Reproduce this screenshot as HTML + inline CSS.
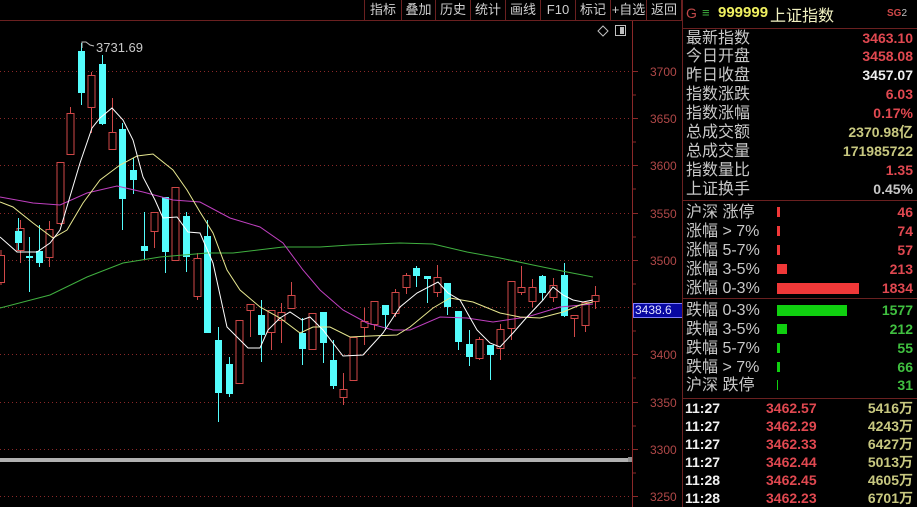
<!DOCTYPE html>
<html><head><meta charset="utf-8"><style>
*{margin:0;padding:0;box-sizing:border-box}
html,body{width:917px;height:507px;overflow:hidden}
body{background:#000;position:relative;font-family:"Liberation Sans","Noto Sans CJK SC",sans-serif}
.a{position:absolute;white-space:nowrap}
.tb{position:absolute;top:0;height:20px;border-right:1px solid #6a2020;color:#d0d0d0;font-size:13px;line-height:20px;text-align:center}
.lb{position:absolute;left:686px;color:#c8c8c8;font-size:16px;line-height:19px}
.v{position:absolute;right:4px;font-size:14px;font-weight:bold;line-height:19px;text-align:right;white-space:nowrap}
.t{position:absolute;font-size:14px;font-weight:bold;line-height:18px;white-space:nowrap}
.r{color:#e04850}.g{color:#40c040}.y{color:#c8c880}.w{color:#f0f0f0}.gy{color:#c8c8c8}
.ax{position:absolute;left:650px;color:#b04848;font-size:12px;line-height:12px}
</style></head><body>
<div class="a" style="left:0;top:20px;width:682px;height:1px;background:#6a2020"></div>
<div class="a" style="left:364px;top:0;width:1px;height:20px;background:#6a2020"></div>
<div class="tb" style="left:365px;width:37px">指标</div>
<div class="tb" style="left:402px;width:34px">叠加</div>
<div class="tb" style="left:436px;width:35px">历史</div>
<div class="tb" style="left:471px;width:35px">统计</div>
<div class="tb" style="left:506px;width:35px">画线</div>
<div class="tb" style="left:541px;width:35px">F10</div>
<div class="tb" style="left:576px;width:35px">标记</div>
<div class="tb" style="left:611px;width:36px">+自选</div>
<div class="tb" style="left:647px;width:35px">返回</div>

<svg class="a" style="left:0;top:0" width="682" height="507">
<g stroke="#8a2828" stroke-width="1" stroke-dasharray="1,3">
<line x1="0" y1="71.5" x2="632" y2="71.5"/><line x1="0" y1="118.5" x2="632" y2="118.5"/><line x1="0" y1="165.5" x2="632" y2="165.5"/><line x1="0" y1="213.5" x2="632" y2="213.5"/><line x1="0" y1="260.5" x2="632" y2="260.5"/><line x1="0" y1="307.5" x2="632" y2="307.5"/><line x1="0" y1="354.5" x2="632" y2="354.5"/><line x1="0" y1="402.5" x2="632" y2="402.5"/><line x1="0" y1="449.5" x2="632" y2="449.5"/><line x1="0" y1="496.5" x2="632" y2="496.5"/>
</g>
<line x1="632.5" y1="21" x2="632.5" y2="507" stroke="#8a2828"/>
<g stroke="#8a2828">
<line x1="633" y1="71.5" x2="638" y2="71.5"/><line x1="633" y1="118.5" x2="638" y2="118.5"/><line x1="633" y1="165.5" x2="638" y2="165.5"/><line x1="633" y1="213.5" x2="638" y2="213.5"/><line x1="633" y1="260.5" x2="638" y2="260.5"/><line x1="633" y1="307.5" x2="638" y2="307.5"/><line x1="633" y1="354.5" x2="638" y2="354.5"/><line x1="633" y1="402.5" x2="638" y2="402.5"/><line x1="633" y1="449.5" x2="638" y2="449.5"/><line x1="633" y1="496.5" x2="638" y2="496.5"/>
<line x1="633" y1="95" x2="636" y2="95"/><line x1="633" y1="142" x2="636" y2="142"/><line x1="633" y1="189" x2="636" y2="189"/><line x1="633" y1="237" x2="636" y2="237"/><line x1="633" y1="284" x2="636" y2="284"/><line x1="633" y1="331" x2="636" y2="331"/><line x1="633" y1="378" x2="636" y2="378"/><line x1="633" y1="426" x2="636" y2="426"/><line x1="633" y1="473" x2="636" y2="473"/>
</g>
<rect x="0" y="458" width="632" height="4" fill="#b0b0b0"/>
<polygon points="603,26 608,31 603,36 598,31" fill="none" stroke="#c0c0c0"/>
<rect x="615.5" y="25.5" width="10" height="10" fill="none" stroke="#c0c0c0"/><rect x="620" y="27" width="4" height="7" fill="#c0c0c0"/>

<g stroke="#d04848" fill="#000" stroke-width="1">
<line x1="1" y1="250" x2="1" y2="285"/><rect x="-2.5" y="255.5" width="7" height="27"/>
<line x1="20.5" y1="220" x2="20.5" y2="263"/><rect x="17" y="228.5" width="7" height="22"/>
<line x1="49.5" y1="221" x2="49.5" y2="267"/><rect x="46" y="229.5" width="7" height="28"/>
<line x1="60.5" y1="162" x2="60.5" y2="225"/><rect x="57" y="162.5" width="7" height="61"/>
<line x1="70.5" y1="107" x2="70.5" y2="155"/><rect x="67" y="113.5" width="7" height="41"/>
<line x1="91.5" y1="72" x2="91.5" y2="133"/><rect x="88" y="75.5" width="7" height="32"/>
<line x1="112.5" y1="98" x2="112.5" y2="149"/><rect x="109" y="132.5" width="7" height="17"/>
<line x1="154.5" y1="212" x2="154.5" y2="248"/><rect x="151" y="212.5" width="7" height="19"/>
<rect x="172" y="187.5" width="7" height="73"/>
<line x1="197.5" y1="253" x2="197.5" y2="300"/><rect x="194" y="258.5" width="7" height="38"/>
<rect x="236" y="320.5" width="7" height="63"/>
<line x1="250.5" y1="304" x2="250.5" y2="337"/><rect x="247" y="304.5" width="7" height="6"/>
<line x1="271.5" y1="310" x2="271.5" y2="350"/><rect x="268" y="310.5" width="7" height="22"/>
<line x1="281.5" y1="303" x2="281.5" y2="343"/><rect x="278" y="312.5" width="7" height="8"/>
<line x1="291.5" y1="282" x2="291.5" y2="308"/><rect x="288" y="295.5" width="7" height="13"/>
<rect x="309" y="313.5" width="7" height="36"/>
<line x1="343.5" y1="373" x2="343.5" y2="405"/><rect x="340" y="389.5" width="7" height="8"/>
<rect x="350" y="337.5" width="7" height="43"/>
<line x1="364.5" y1="308" x2="364.5" y2="345"/><rect x="361" y="321.5" width="7" height="6"/>
<line x1="374.5" y1="301" x2="374.5" y2="330"/><rect x="371" y="301.5" width="7" height="23"/>
<line x1="395.5" y1="289" x2="395.5" y2="317"/><rect x="392" y="292.5" width="7" height="21"/>
<line x1="406.5" y1="273" x2="406.5" y2="294"/><rect x="403" y="275.5" width="7" height="12"/>
<line x1="437.5" y1="265" x2="437.5" y2="297"/><rect x="434" y="277.5" width="7" height="15"/>
<line x1="479.5" y1="337" x2="479.5" y2="360"/><rect x="476" y="339.5" width="7" height="19"/>
<line x1="500.5" y1="324" x2="500.5" y2="360"/><rect x="497" y="329.5" width="7" height="19"/>
<line x1="511.5" y1="281" x2="511.5" y2="340"/><rect x="508" y="281.5" width="7" height="47"/>
<line x1="521.5" y1="266" x2="521.5" y2="295"/><rect x="518" y="287.5" width="7" height="5"/>
<line x1="532.5" y1="279" x2="532.5" y2="307"/><rect x="529" y="287.5" width="7" height="14"/>
<line x1="553.5" y1="278" x2="553.5" y2="302"/><rect x="550" y="285.5" width="7" height="12"/>
<line x1="574.5" y1="315" x2="574.5" y2="337"/><rect x="571" y="315.5" width="7" height="3"/>
<line x1="585.5" y1="302" x2="585.5" y2="332"/><rect x="582" y="302.5" width="7" height="23"/>
<line x1="595.5" y1="286" x2="595.5" y2="309"/><rect x="592" y="295.5" width="7" height="6"/>
</g>
<g fill="#54fcfc" stroke="#54fcfc">
<line x1="18.5" y1="218" x2="18.5" y2="250"/><rect x="15" y="231" width="7" height="12" stroke="none"/>
<line x1="29.5" y1="237" x2="29.5" y2="292"/><rect x="26" y="256" width="7" height="2" stroke="none"/>
<line x1="39.5" y1="225" x2="39.5" y2="267"/><rect x="36" y="251" width="7" height="12" stroke="none"/>
<line x1="81.5" y1="43" x2="81.5" y2="105"/><rect x="78" y="51" width="7" height="42" stroke="none"/>
<line x1="102.5" y1="55" x2="102.5" y2="125"/><rect x="99" y="64" width="7" height="60" stroke="none"/>
<line x1="122.5" y1="123" x2="122.5" y2="230"/><rect x="119" y="129" width="7" height="70" stroke="none"/>
<line x1="133.5" y1="158" x2="133.5" y2="194"/><rect x="130" y="170" width="7" height="10" stroke="none"/>
<line x1="144.5" y1="212" x2="144.5" y2="260"/><rect x="141" y="246" width="7" height="5" stroke="none"/>
<line x1="165.5" y1="197" x2="165.5" y2="273"/><rect x="162" y="197" width="7" height="55" stroke="none"/>
<line x1="186.5" y1="212" x2="186.5" y2="272"/><rect x="183" y="216" width="7" height="41" stroke="none"/>
<line x1="207.5" y1="220" x2="207.5" y2="333"/><rect x="204" y="236" width="7" height="97" stroke="none"/>
<line x1="218.5" y1="327" x2="218.5" y2="422"/><rect x="215" y="340" width="7" height="53" stroke="none"/>
<line x1="229.5" y1="357" x2="229.5" y2="397"/><rect x="226" y="364" width="7" height="30" stroke="none"/>
<line x1="261.5" y1="300" x2="261.5" y2="362"/><rect x="258" y="315" width="7" height="20" stroke="none"/>
<line x1="302.5" y1="318" x2="302.5" y2="365"/><rect x="299" y="333" width="7" height="16" stroke="none"/>
<line x1="323.5" y1="312" x2="323.5" y2="363"/><rect x="320" y="312" width="7" height="31" stroke="none"/>
<line x1="333.5" y1="340" x2="333.5" y2="389"/><rect x="330" y="360" width="7" height="26" stroke="none"/>
<line x1="385.5" y1="305" x2="385.5" y2="330"/><rect x="382" y="305" width="7" height="10" stroke="none"/>
<line x1="416.5" y1="266" x2="416.5" y2="287"/><rect x="413" y="268" width="7" height="8" stroke="none"/>
<line x1="427.5" y1="276" x2="427.5" y2="303"/><rect x="424" y="276" width="7" height="3" stroke="none"/>
<line x1="447.5" y1="283" x2="447.5" y2="315"/><rect x="444" y="283" width="7" height="24" stroke="none"/>
<line x1="458.5" y1="311" x2="458.5" y2="350"/><rect x="455" y="311" width="7" height="31" stroke="none"/>
<line x1="469.5" y1="330" x2="469.5" y2="366"/><rect x="466" y="344" width="7" height="13" stroke="none"/>
<line x1="490.5" y1="345" x2="490.5" y2="380"/><rect x="487" y="345" width="7" height="10" stroke="none"/>
<line x1="542.5" y1="275" x2="542.5" y2="300"/><rect x="539" y="276" width="7" height="17" stroke="none"/>
<line x1="564.5" y1="263" x2="564.5" y2="317"/><rect x="561" y="275" width="7" height="41" stroke="none"/>
</g>
<g fill="none" stroke-width="1">
<polyline stroke="#40b040" points="0,308 50,295 87,277 123,263 160,257 207,253 233,253 283,247 320,247 350,245 400,243 433,244 467,252 500,258 533,265 567,272 593,277"/>
<polyline stroke="#c040c0" points="0,197 33,203 60,205 87,193 117,186 143,192 173,200 200,202 230,218 260,227 283,243 303,270 320,290 343,310 367,323 393,330 410,330 440,317 467,318 493,322 527,317 560,307 593,304"/>
<polyline stroke="#e8e890" points="0,202 13,207 33,223 53,238 67,230 83,203 100,180 120,165 137,156 153,154 173,170 187,190 200,212 213,233 227,270 240,290 260,307 280,318 300,333 313,327 330,327 350,337 370,336 397,335 410,327 433,308 450,298 473,302 500,313 520,317 540,318 563,312 580,305 593,302"/>
<polyline stroke="#ffffff" points="0,237 17,252 37,252 50,243 60,230 80,163 92,128 100,118 112,108 123,120 133,140 143,177 155,200 163,218 177,217 188,232 200,233 213,263 227,327 248,348 260,348 268,330 280,318 290,312 302,320 310,317 323,330 343,356 363,355 383,333 400,307 417,293 438,282 448,293 460,300 477,330 490,343 500,347 513,333 527,317 543,300 553,287 563,295 573,300 583,302 593,300"/>
</g>
<polyline points="82,48 82,42 86,42 90,45 94,46" fill="none" stroke="#c0c0c0"/>
<text x="96" y="52" fill="#c8c8c8" font-size="13" font-family="Liberation Sans">3731.69</text>
<rect x="628" y="457" width="4" height="5" fill="#909090"/>
</svg>

<div class="ax" style="top:66px">3700</div><div class="ax" style="top:113px">3650</div><div class="ax" style="top:160px">3600</div><div class="ax" style="top:208px">3550</div><div class="ax" style="top:255px">3500</div><div class="ax" style="top:349px">3400</div><div class="ax" style="top:397px">3350</div><div class="ax" style="top:444px">3300</div><div class="ax" style="top:491px">3250</div>
<div class="a" style="left:633px;top:303px;width:50px;height:15px;background:#0808a0;border:1px solid #8080ff;color:#e0e0ff;font-size:12px;line-height:13px;padding-left:1px">3438.6</div>

<div class="a" style="left:682px;top:0;width:1px;height:507px;background:#6a2020"></div>
<div class="a" style="left:683px;top:28px;width:234px;height:1px;background:#6a2020"></div>
<div class="a" style="left:683px;top:200px;width:234px;height:1px;background:#6a2020"></div>
<div class="a" style="left:683px;top:298px;width:234px;height:1px;background:#6a2020"></div>
<div class="a" style="left:683px;top:398px;width:234px;height:1px;background:#6a2020"></div>

<div class="a" style="left:686px;top:5px;color:#c04848;font-size:14px">G</div>
<div class="a" style="left:702px;top:5px;color:#40b040;font-size:13px">≡</div>
<div class="a" style="left:718px;top:4px;color:#f0f060;font-size:15px;font-weight:bold">999999</div>
<div class="a" style="left:770px;top:2px;color:#f0f0c0;font-size:16px">上证指数</div>
<div class="a" style="left:887px;top:8px;color:#d04848;font-size:10px;font-weight:bold">SG<span style="color:#c0c0c0;font-weight:normal">2</span></div>

<div class="lb" style="top:29px">最新指数</div><div class="v r" style="top:29px">3463.10</div>
<div class="lb" style="top:47px">今日开盘</div><div class="v r" style="top:47px">3458.08</div>
<div class="lb" style="top:66px">昨日收盘</div><div class="v w" style="top:66px">3457.07</div>
<div class="lb" style="top:85px">指数涨跌</div><div class="v r" style="top:85px">6.03</div>
<div class="lb" style="top:104px">指数涨幅</div><div class="v r" style="top:104px">0.17%</div>
<div class="lb" style="top:123px">总成交额</div><div class="v y" style="top:123px">2370.98亿</div>
<div class="lb" style="top:142px">总成交量</div><div class="v y" style="top:142px">171985722</div>
<div class="lb" style="top:161px">指数量比</div><div class="v r" style="top:161px">1.35</div>
<div class="lb" style="top:180px">上证换手</div><div class="v gy" style="top:180px">0.45%</div>

<div class="lb" style="top:203px">沪深 涨停</div><div class="v r" style="top:203px">46</div>
<div class="lb" style="top:222px">涨幅 &gt; 7%</div><div class="v r" style="top:222px">74</div>
<div class="lb" style="top:241px">涨幅 5-7%</div><div class="v r" style="top:241px">57</div>
<div class="lb" style="top:260px">涨幅 3-5%</div><div class="v r" style="top:260px">213</div>
<div class="lb" style="top:279px">涨幅 0-3%</div><div class="v r" style="top:279px">1834</div>
<div class="lb" style="top:301px">跌幅 0-3%</div><div class="v g" style="top:301px">1577</div>
<div class="lb" style="top:320px">跌幅 3-5%</div><div class="v g" style="top:320px">212</div>
<div class="lb" style="top:339px">跌幅 5-7%</div><div class="v g" style="top:339px">55</div>
<div class="lb" style="top:358px">跌幅 &gt; 7%</div><div class="v g" style="top:358px">66</div>
<div class="lb" style="top:376px">沪深 跌停</div><div class="v g" style="top:376px">31</div>

<div class="a" style="left:777px;top:207px;width:3px;height:10px;background:#f03838"></div>
<div class="a" style="left:777px;top:226px;width:3px;height:10px;background:#f03838"></div>
<div class="a" style="left:777px;top:245px;width:3px;height:10px;background:#f03838"></div>
<div class="a" style="left:777px;top:264px;width:10px;height:10px;background:#f03838"></div>
<div class="a" style="left:777px;top:283px;width:82px;height:11px;background:#f03838"></div>
<div class="a" style="left:777px;top:305px;width:70px;height:11px;background:#10d010"></div>
<div class="a" style="left:777px;top:324px;width:10px;height:10px;background:#10d010"></div>
<div class="a" style="left:777px;top:343px;width:3px;height:10px;background:#10d010"></div>
<div class="a" style="left:777px;top:362px;width:3px;height:10px;background:#10d010"></div>
<div class="a" style="left:777px;top:380px;width:1px;height:10px;background:#10d010"></div>

<div class="t w" style="left:685px;top:399px">11:27</div><div class="t r" style="left:766px;top:399px">3462.57</div><div class="v y" style="top:399px;line-height:18px">5416万</div>
<div class="t w" style="left:685px;top:417px">11:27</div><div class="t r" style="left:766px;top:417px">3462.29</div><div class="v y" style="top:417px;line-height:18px">4243万</div>
<div class="t w" style="left:685px;top:435px">11:27</div><div class="t r" style="left:766px;top:435px">3462.33</div><div class="v y" style="top:435px;line-height:18px">6427万</div>
<div class="t w" style="left:685px;top:453px">11:27</div><div class="t r" style="left:766px;top:453px">3462.44</div><div class="v y" style="top:453px;line-height:18px">5013万</div>
<div class="t w" style="left:685px;top:471px">11:28</div><div class="t r" style="left:766px;top:471px">3462.45</div><div class="v y" style="top:471px;line-height:18px">4605万</div>
<div class="t w" style="left:685px;top:489px">11:28</div><div class="t r" style="left:766px;top:489px">3462.23</div><div class="v y" style="top:489px;line-height:18px">6701万</div>
</body></html>
